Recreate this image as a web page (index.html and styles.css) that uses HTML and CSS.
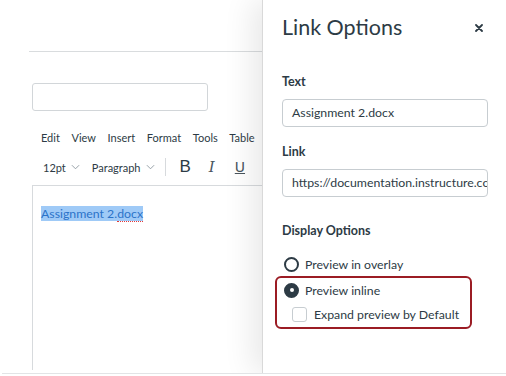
FILE: index.html
```html
<!DOCTYPE html>
<html>
<head>
<meta charset="utf-8">
<link rel="stylesheet" href="styles.css">
</head>
<body>
<div class="frame">
  <div class="editor">
    <div class="topbar"></div>
    <div class="title-input"></div>
    <div class="menubar">
      <span>Edit</span><span>View</span><span>Insert</span><span>Format</span><span>Tools</span><span>Table</span>
    </div>
    <div class="toolbar">
      <span class="dd">12pt <svg class="chev" viewBox="0 0 10 6" width="9" height="6"><path d="M1 1l4 4 4-4" fill="none" stroke="#8b969e" stroke-width="1"/></svg></span>
      <span class="dd para">Paragraph <svg class="chev" viewBox="0 0 10 6" width="9" height="6"><path d="M1 1l4 4 4-4" fill="none" stroke="#8b969e" stroke-width="1"/></svg></span>
      <span class="sep"></span>
      <span class="tb-b">B</span>
      <span class="tb-i">I</span>
      <span class="tb-u">U</span>
    </div>
    <div class="doc">
      <span class="sel">Assignment 2.<span class="spell">docx</span></span>
    </div>
  </div>
  <div class="panel">
    <div class="panel-head">
      <h1 class="panel-title">Link Options</h1>
      <svg class="close" viewBox="0 0 8 8" width="8" height="8" aria-label="Close"><path d="M1 1l6 6M7 1l-6 6" stroke="#2d3b45" stroke-width="1.8" stroke-linecap="round"/></svg>
    </div>
    <div class="field-label">Text</div>
    <div class="field-input">Assignment 2.docx</div>
    <div class="field-label label-link">Link</div>
    <div class="field-input">https://documentation.instructure.com/</div>
    <div class="field-label label-display">Display Options</div>
    <div class="opt opt-first"><span class="radio"></span>Preview in overlay</div>
    <div class="highlight">
      <div class="opt"><span class="radio checked"></span>Preview inline</div>
      <div class="opt opt-check"><span class="check"></span>Expand preview by Default</div>
    </div>
  </div>
</div>
</body>
</html>
```

FILE: styles.css
```css
html, body {
  margin: 0;
  padding: 0;
  background: #fff;
}
body {
  font-family: Lato, "Open Sans", sans-serif;
  color: #2d3b45;
  width: 506px;
  height: 376px;
  overflow: hidden;
}
.frame {
  display: flex;
  height: 373px;
  margin-left: 2px;
  border-bottom: 1px solid #e2e4e6;
  overflow: hidden;
}
.editor {
  width: 260px;
  flex: none;
}
.topbar {
  height: 51px;
  margin-left: 27px;
  border-bottom: 1px solid #d9dcde;
}
.title-input {
  margin: 31px 0 0 30px;
  width: 176px;
  height: 28px;
  box-sizing: border-box;
  border: 1px solid #d2d6d9;
  border-radius: 3px;
}
.menubar {
  margin: 16px 0 0 39px;
  height: 22px;
  line-height: 22px;
  font-size: 11px;
  display: flex;
  gap: 11.6px;
  white-space: nowrap;
}
.toolbar {
  height: 36px;
  margin-left: 41px;
  display: flex;
  align-items: center;
  font-size: 11px;
  white-space: nowrap;
}
.dd {
  display: inline-flex;
  align-items: center;
  gap: 5px;
}
.para {
  margin-left: 12px;
}
.chev {
  display: block;
}
.sep {
  width: 1px;
  height: 18px;
  background: #d7dadd;
  margin-left: 10px;
}
.tb-b {
  font-family: "Liberation Sans", Arial, sans-serif;
  font-size: 17px;
  margin-left: 14px;
  color: #2d3b45;
}
.tb-i {
  font-family: "DejaVu Serif", serif;
  font-style: italic;
  font-size: 15px;
  font-weight: 300;
  margin-left: 18px;
  color: #4a555d;
}
.tb-u {
  font-family: "DejaVu Sans", sans-serif;
  font-size: 14px;
  margin-left: 20px;
  text-decoration: underline;
  color: #4a555d;
}
.doc {
  margin-left: 30px;
  height: 185px;
  border-top: 1px solid #d7dadd;
  border-left: 1px solid #d7dadd;
  padding: 20px 0 0 8px;
  box-sizing: border-box;
  font-size: 12.3px;
  line-height: 16px;
}
.sel {
  background: #9fcaf7;
  color: #2b73c9;
}
.spell {
  border-bottom: 1px dotted #e23a3a;
}
.panel {
  width: 244px;
  min-width: 0;
  flex: none;
  box-sizing: border-box;
  background: #fff;
  border-left: 1px solid #d9d9d9;
  box-shadow: -10px 0 28px rgba(0, 0, 0, 0.09);
  padding: 13px 18px 0 19px;
}
.panel-head {
  display: flex;
  justify-content: space-between;
  align-items: center;
  height: 28px;
}
.panel-title {
  margin: 0;
  font-size: 21.5px;
  font-weight: 400;
  line-height: 28px;
  color: #2d3b45;
}
.close {
  display: block;
  margin: 2px 5px 0 0;
}
.field-label {
  margin-top: 32px;
  line-height: 18px;
  font-size: 12.5px;
  font-weight: 700;
}
.label-link {
  margin-top: 16px;
}
.label-display {
  margin-top: 25px;
}
.field-input {
  margin-top: 8px;
  height: 28px;
  box-sizing: border-box;
  border: 1px solid #c7cdd1;
  border-radius: 4px;
  padding: 0 9px;
  line-height: 26px;
  font-size: 12.3px;
  white-space: nowrap;
  overflow: hidden;
}
.opt {
  display: flex;
  align-items: center;
  height: 24px;
  font-size: 12.3px;
  white-space: nowrap;
}
.opt-first {
  margin-top: 12px;
  padding-left: 2px;
}
.radio {
  width: 15px;
  height: 15px;
  box-sizing: border-box;
  border: 2px solid #2d3b45;
  border-radius: 50%;
  margin-right: 6px;
  flex: none;
}
.radio.checked {
  background: #2d3b45;
  position: relative;
}
.radio.checked::after {
  content: "";
  position: absolute;
  left: 3.5px;
  top: 3.5px;
  width: 4px;
  height: 4px;
  border-radius: 50%;
  background: #fff;
}
.highlight {
  margin-left: -7px;
  width: 197px;
  box-sizing: border-box;
  border: 2px solid #9b1c24;
  border-radius: 6px;
  padding-left: 7px;
}
.opt-check {
  height: 25px;
  padding-left: 8px;
}
.check {
  width: 15px;
  height: 15px;
  box-sizing: border-box;
  border: 1px solid #c7cdd1;
  border-radius: 3px;
  margin-right: 7px;
  flex: none;
}
```
